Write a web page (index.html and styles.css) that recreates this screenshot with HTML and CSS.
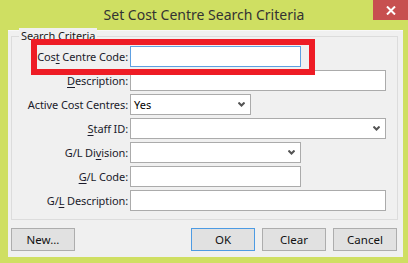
FILE: index.html
```html
<!DOCTYPE html>
<html>
<head>
<meta charset="utf-8">
<link rel="stylesheet" href="styles.css">
</head>
<body>
<div class="window">
  <div class="titlebar">
    <span></span>
    <div class="title">Set Cost Centre Search Criteria</div>
    <div class="close"><svg width="10" height="9" viewBox="0 0 10 9"><path d="M1 0.5 L9 8.5 M9 0.5 L1 8.5" stroke="#fff" stroke-width="2"/></svg></div>
  </div>
  <div class="client">
    <div class="group">
      <span class="legend">Search Criteria</span>
      <div class="form">
        <label>Cos<u>t</u> Centre Code:</label>
        <div class="field w171 focus"></div>
        <label><u>D</u>escription:</label>
        <div class="field w256"></div>
        <label>Active Cost Centres:</label>
        <div class="field select w121"><span>Yes</span><svg class="chev" width="7" height="5" viewBox="0 0 7 5"><path d="M0.5 0.5 L3.5 3.5 L6.5 0.5" fill="none" stroke="#555" stroke-width="2"/></svg></div>
        <label><u>S</u>taff ID:</label>
        <div class="field select w256"><span></span><svg class="chev" width="7" height="5" viewBox="0 0 7 5"><path d="M0.5 0.5 L3.5 3.5 L6.5 0.5" fill="none" stroke="#555" stroke-width="2"/></svg></div>
        <label>G/L Di<u>v</u>ision:</label>
        <div class="field select w171"><span></span><svg class="chev" width="7" height="5" viewBox="0 0 7 5"><path d="M0.5 0.5 L3.5 3.5 L6.5 0.5" fill="none" stroke="#555" stroke-width="2"/></svg></div>
        <label><u>G</u>/L Code:</label>
        <div class="field w171"></div>
        <label>G/<u>L</u> Description:</label>
        <div class="field w256"></div>
      </div>
      <div class="highlight"></div>
    </div>
    <div class="buttons">
      <button class="btn">New...</button>
      <span class="spacer"></span>
      <button class="btn default">OK</button>
      <button class="btn">Clear</button>
      <button class="btn">Cancel</button>
    </div>
  </div>
</div>
</body>
</html>
```

FILE: styles.css
```css
* { box-sizing: border-box; }
html, body { margin: 0; padding: 0; }
body { width: 408px; height: 263px; overflow: hidden; font-family: "Noto Sans", "Open Sans", sans-serif; }

.window {
  width: 408px;
  height: 263px;
  background: #cfdf62;
  display: flex;
  flex-direction: column;
}

.titlebar {
  height: 30px;
  display: grid;
  grid-template-columns: 1fr auto 1fr;
  align-items: start;
}
.title {
  font-size: 14px;
  color: #333;
  line-height: 30px;
  white-space: nowrap;
}
.close {
  justify-self: end;
  width: 35px;
  height: 20px;
  background: #c75050;
  display: flex;
  align-items: center;
  justify-content: center;
}

.client {
  margin-left: 8px;
  width: 395px;
  height: 227px;
  background: #f0f0f0;
  border-top: 1px solid #f8f8f8;
  padding: 5px 6px 0 3px;
  display: flex;
  flex-direction: column;
}

.group {
  position: relative;
  width: 387px;
  height: 184px;
  border: 1px solid #dcdcdc;
  padding: 9px 0 0 0;
}
.legend {
  position: absolute;
  left: 7px;
  top: -9px;
  padding: 0 2px;
  background: #f0f0f0;
  font-size: 11px;
  letter-spacing: -0.1px;
  line-height: 16px;
  color: #1a1a1a;
}

.form {
  display: grid;
  grid-template-columns: 116px auto;
  column-gap: 2px;
  row-gap: 3px;
  grid-auto-rows: 21px;
  justify-items: start;
  align-items: center;
}
.form label {
  justify-self: end;
  font-size: 11px;
  letter-spacing: -0.1px;
  color: #1b1b2b;
  white-space: nowrap;
  line-height: 21px;
}
.form label u { text-decoration-thickness: 1px; text-underline-offset: 2px; }

.field {
  height: 21px;
  background: #fff;
  border: 1px solid #ababab;
  font-size: 11px;
  color: #000;
  display: flex;
  align-items: center;
  padding: 0 5px 0 3px;
}
.field.focus { border-color: #5ea0e2; }
.select { justify-content: space-between; }
.chev { display: block; }
.w171 { width: 171px; }
.w256 { width: 256px; }
.w121 { width: 121px; }

.highlight {
  position: absolute;
  left: 19px;
  top: 2px;
  width: 284px;
  height: 36px;
  border: 6px solid #ee1c25;
}

.buttons {
  margin-top: 8px;
  display: flex;
  gap: 7px;
}
.spacer { flex: 1; }
.btn {
  width: 64px;
  height: 23px;
  margin: 0;
  background: #e1e1e1;
  border: 1px solid #adadad;
  border-radius: 0;
  font-family: "Noto Sans", "Open Sans", sans-serif;
  font-size: 11.5px;
  color: #111;
  padding: 0;
}
.btn.default { border-color: #4d9be3; }
```
